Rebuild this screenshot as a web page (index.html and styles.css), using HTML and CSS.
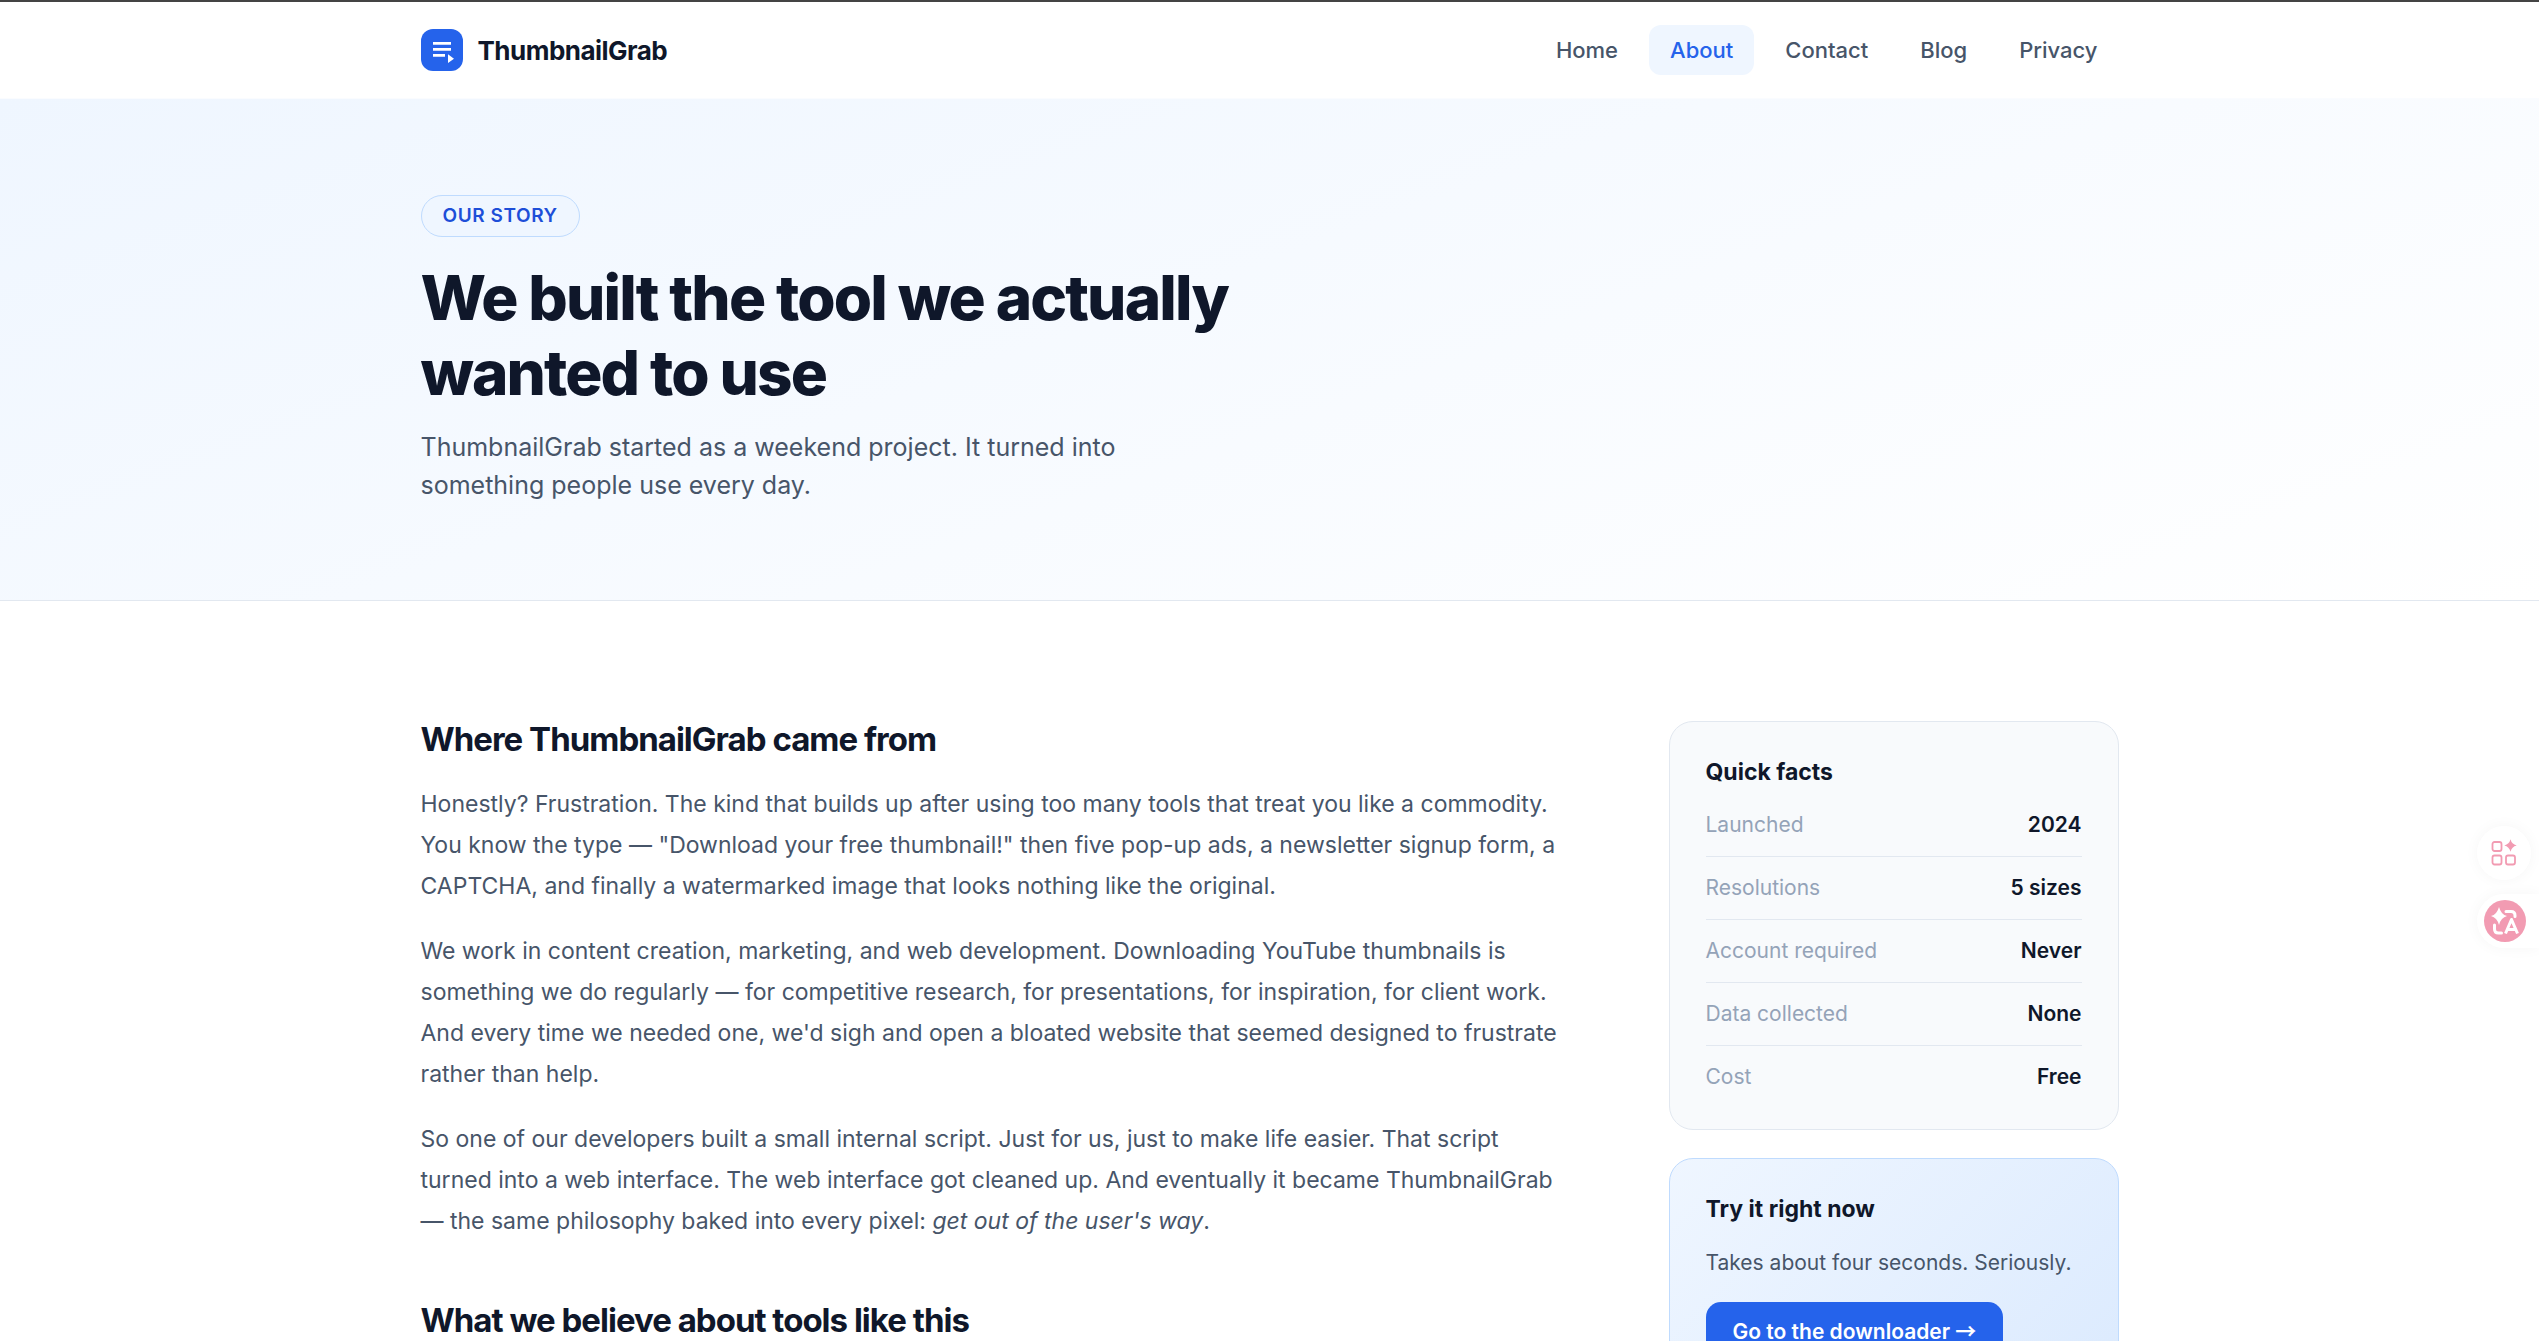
FILE: index.html
```html
<!DOCTYPE html>
<html lang="en">
<head>
    <meta charset="UTF-8">
    <meta name="viewport" content="width=device-width, initial-scale=1.0">
    <title>About - ThumbnailGrab</title>
    <link rel="stylesheet" href="styles.css">
</head>
<body>
    <!-- Header -->
    <header class="site-header">
        <div class="container header-inner">
            <a class="logo" href="#home">
                <span class="logo-mark">
                    <svg viewBox="0 0 24 24" fill="#fff" aria-hidden="true">
                        <path d="M3 4h18v2.800H3zM3 10h18v2.800H3zM3 16h12v2.800H3zM18 16.300l6 4.400-6 4.400z"/>
                    </svg>
                </span>
                ThumbnailGrab
            </a>
            <nav class="main-nav">
                <a href="#home">Home</a>
                <a href="#about" class="active">About</a>
                <a href="#contact">Contact</a>
                <a href="#blog">Blog</a>
                <a href="#privacy">Privacy</a>
            </nav>
        </div>
    </header>

    <!-- Hero -->
    <section class="hero" id="about">
        <div class="container">
            <span class="badge">Our Story</span>
            <h1>We built the tool we actually wanted to use</h1>
            <p>ThumbnailGrab started as a weekend project. It turned into something people use every day.</p>
        </div>
    </section>

    <!-- Story and sidebar -->
    <main class="container content">
        <article class="story">
            <h2>Where ThumbnailGrab came from</h2>
            <p>Honestly? Frustration. The kind that builds up after using too many tools that treat you like a commodity. You know the type — "Download your free thumbnail!" then five pop-up ads, a newsletter signup form, a CAPTCHA, and finally a watermarked image that looks nothing like the original.</p>
            <p>We work in content creation, marketing, and web development. Downloading YouTube thumbnails is something we do regularly — for competitive research, for presentations, for inspiration, for client work. And every time we needed one, we'd sigh and open a bloated website that seemed designed to frustrate rather than help.</p>
            <p>So one of our developers built a small internal script. Just for us, just to make life easier. That script turned into a web interface. The web interface got cleaned up. And eventually it became ThumbnailGrab — the same philosophy baked into every pixel: <em>get out of the user's way</em>.</p>
            <h2>What we believe about tools like this</h2>
        </article>

        <aside class="sidebar">
            <div class="card">
                <h3>Quick facts</h3>
                <dl class="facts">
                    <div><dt>Launched</dt><dd>2024</dd></div>
                    <div><dt>Resolutions</dt><dd>5 sizes</dd></div>
                    <div><dt>Account required</dt><dd>Never</dd></div>
                    <div><dt>Data collected</dt><dd>None</dd></div>
                    <div><dt>Cost</dt><dd>Free</dd></div>
                </dl>
            </div>
            <div class="card card-blue">
                <h3>Try it right now</h3>
                <p>Takes about four seconds. Seriously.</p>
                <a class="btn" href="#home">Go to the downloader <span class="arrow">→</span></a>
            </div>
        </aside>
    </main>

    <!-- Floating tools -->
    <div class="float-tools">
        <button type="button" class="tool-apps" aria-label="Apps">
            <svg viewBox="0 0 26 26" fill="none" stroke="#f29bb2" stroke-width="1.800" aria-hidden="true">
                <rect x="1.500" y="2" width="9" height="9" rx="2"/>
                <rect x="1.500" y="15.500" width="9" height="9" rx="2"/>
                <rect x="15" y="15.500" width="9" height="9" rx="2"/>
                <path d="M19.500 -0.700Q20.700 4.300 25.700 5.500Q20.700 6.700 19.500 11.700Q18.300 6.700 13.300 5.500Q18.300 4.300 19.500 -0.700z" fill="#f29bb2" stroke="none"/>
            </svg>
        </button>
        <button type="button" class="tool-translate" aria-label="Translate">
            <svg viewBox="0 0 42 42" fill="none" stroke="#fff" stroke-width="3" aria-hidden="true">
                <circle cx="21" cy="21" r="21" fill="#f29bb2" stroke="none"/>
                <path d="M15 7Q17 14.500 23 16Q17 17.500 15 25Q13 17.500 7 16Q13 14.500 15 7z" fill="#fff" stroke="none"/>
                <path d="M22 11.500h5q4 0 4 4v1M10.500 25v4q0 4 4 4h3" stroke-linecap="round"/>
                <path d="M21.500 33.500l6-14 6 14M23.500 29.500h8" stroke-linejoin="round"/>
            </svg>
        </button>
    </div>
</body>
</html>
```

FILE: styles.css
```css
* {
    margin: 0;
    padding: 0;
    box-sizing: border-box;
}

body {
    font-family: 'Inter', sans-serif;
    font-size: 23px;
    line-height: 41px;
    color: #475569;
    background: #fff;
    border-top: 2px solid #444;
}

a {
    text-decoration: none;
    color: inherit;
}

h1, h2, h3 {
    color: #0f172a;
    font-weight: 700;
}

.container {
    max-width: 1770px;
    margin: 0 auto;
    padding: 0 36px;
}

/* Header */
.site-header {
    border-bottom: 1px solid #fafcff;
}

.header-inner {
    display: flex;
    justify-content: space-between;
    align-items: center;
    height: 96px;
}

.logo {
    display: flex;
    align-items: center;
    gap: 15px;
    font-size: 26px;
    font-weight: 700;
    letter-spacing: -0.02em;
    color: #0f172a;
}

.logo-mark {
    display: flex;
    align-items: center;
    justify-content: center;
    width: 42px;
    height: 42px;
    border-radius: 12px;
    background: #2563eb;
}

.logo-mark svg {
    width: 24px;
    height: 24px;
    overflow: visible;
}

.main-nav {
    display: flex;
    gap: 10px;
}

.main-nav a {
    padding: 9px 21px;
    border-radius: 12px;
    font-size: 22px;
    line-height: 32px;
    font-weight: 500;
}

.main-nav a:hover,
.main-nav a.active {
    color: #2563eb;
    background: #eff6ff;
}

/* Hero */
.hero {
    padding: 96px 0;
    background: linear-gradient(160deg, #eff6ff, #fff);
    border-bottom: 1px solid #e2e8f0;
}

.badge {
    display: block;
    width: fit-content;
    margin-bottom: 23px;
    padding: 5px 21px;
    border: 1px solid #bfdbfe;
    border-radius: 21px;
    background: #eff6ff;
    color: #1d4ed8;
    font-size: 19px;
    line-height: 30px;
    font-weight: 600;
    letter-spacing: 0.03em;
    text-transform: uppercase;
}

.hero h1 {
    max-width: 900px;
    margin-bottom: 18px;
    font-size: 62px;
    line-height: 75px;
    font-weight: 800;
    letter-spacing: -0.03em;
}

.hero p {
    max-width: 780px;
    font-size: 25px;
    line-height: 38px;
}

/* Content */
.content {
    display: grid;
    grid-template-columns: minmax(0, 1fr) 450px;
    gap: 102px;
    padding-top: 120px;
    padding-bottom: 120px;
}

.story h2 {
    margin: 60px 0 26px;
    font-size: 33px;
    line-height: 37px;
    letter-spacing: -0.03em;
}

.story h2:first-child {
    margin-top: 0;
}

.story p {
    margin-bottom: 24px;
}

/* Sidebar */
.sidebar {
    display: flex;
    flex-direction: column;
    gap: 28px;
}

.card {
    padding: 36px;
    border: 1px solid #e2e8f0;
    border-radius: 24px;
    background: #f8fafc;
}

.card h3 {
    margin-bottom: 8px;
    font-size: 23px;
    line-height: 28px;
}

.facts div {
    display: flex;
    justify-content: space-between;
    padding: 15px 0;
    border-bottom: 1px solid #e2e8f0;
    font-size: 21px;
    line-height: 32px;
}

.facts div:last-child {
    border-bottom: 0;
    padding-bottom: 0;
}

.facts dt {
    color: #94a3b8;
}

.facts dd {
    color: #0f172a;
    font-weight: 600;
}

.card-blue {
    border-color: #bfdbfe;
    background: linear-gradient(135deg, #eff6ff, #dbeafe);
}

.card-blue h3 {
    margin-bottom: 23px;
}

.card-blue p {
    margin-bottom: 22px;
    font-size: 21px;
    line-height: 34px;
}

.btn {
    display: inline-block;
    padding: 15px 27px;
    border-radius: 15px;
    background: #2563eb;
    color: #fff;
    font-size: 21px;
    line-height: 30px;
    font-weight: 600;
}

.btn:hover {
    background: #1d4ed8;
}

.arrow {
    font-family: 'Noto Sans CJK SC', sans-serif;
    line-height: 1;
}

/* Floating tools */
.float-tools {
    position: fixed;
    top: 826px;
    right: 0;
    display: flex;
    flex-direction: column;
    align-items: flex-end;
    gap: 14px;
}

.float-tools button {
    display: flex;
    align-items: center;
    height: 54px;
    border: 0;
    background: #fff;
    box-shadow: 0 0 15px rgba(0, 0, 0, 0.04);
    cursor: pointer;
}

.tool-apps {
    justify-content: center;
    width: 54px;
    margin-right: 8px;
    border-radius: 50%;
}

.tool-apps svg {
    width: 26px;
    height: 26px;
    overflow: visible;
}

.tool-translate {
    width: 62px;
    padding-left: 7px;
    border-radius: 27px 0 0 27px;
}

.tool-translate svg {
    width: 42px;
    height: 42px;
}
```
